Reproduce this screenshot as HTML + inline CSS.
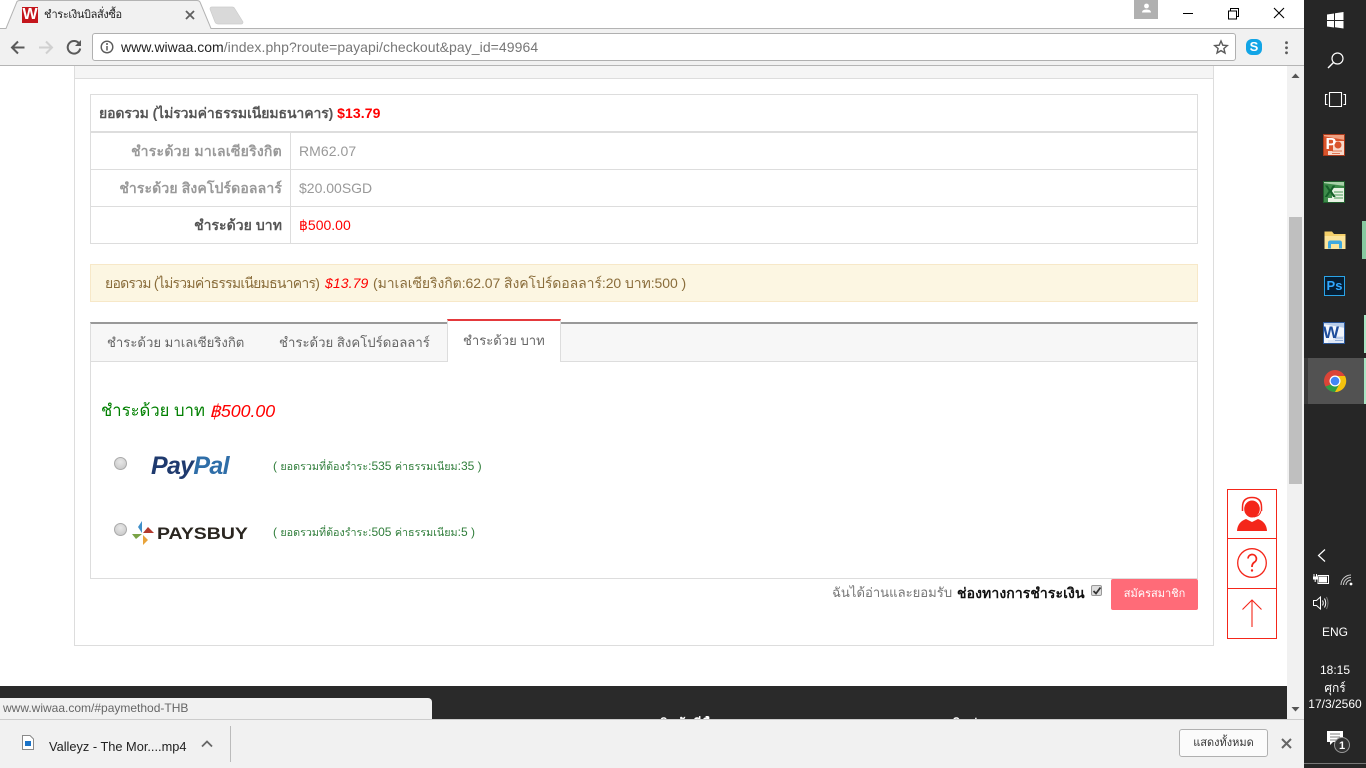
<!DOCTYPE html>
<html><head><meta charset="utf-8"><title>ชำระเงินบิลสั่งซื้อ</title>
<style>
html,body{margin:0;padding:0;width:1366px;height:768px;overflow:hidden;background:#fff;font-family:"Liberation Sans","Noto Sans CJK SC",sans-serif;font-size:14px;color:#333}
.a{position:absolute;white-space:nowrap;box-sizing:border-box}
svg{position:absolute;overflow:visible}
.t{font-size:10.75px}
</style></head><body>
<!-- tab strip -->
<div class="a" style="left:0;top:0;width:1304px;height:29px;background:#fff"></div>
<div class="a" style="left:0;top:28px;width:1304px;height:38px;background:#f1f1f1"></div>
<div class="a" style="left:0;top:65px;width:1304px;height:1px;background:#b5b5b5"></div>
<svg style="left:0;top:0" width="260" height="30"><path d="M0 28.5H6L17 1.5Q18 0.5 20 0.5H197Q199 .5 200 2L211 28.5H1304" fill="#f1f1f1" stroke="#b3b3b3"/><path d="M210 9Q210 7 212 7H232Q234 7 235 9L243 22Q243 24 241 24H218Q216 24 215 22Z" fill="#d9d9d9" stroke="#ccc" stroke-width=".7"/></svg>
<div class="a" style="left:22px;top:7px;width:16px;height:16px;background:#c4161c;color:#fff;font:bold 16px/16px 'Liberation Sans';text-align:center">W</div>
<div class="a" style="left:44px;top:8px;font-size:11px;line-height:15px;letter-spacing:-.35px;color:#222">ชำระเงินบิลสั่งซื้อ</div>
<svg style="left:185px;top:10px" width="10" height="10"><path d="M1 1L9 9M9 1L1 9" stroke="#5f5f5f" stroke-width="1.8"/></svg>
<!-- window controls -->
<div class="a" style="left:1134px;top:0;width:24px;height:19px;background:#b0b0b0"></div>
<svg style="left:1141px;top:3px" width="11" height="10"><circle cx="5.500" cy="3" r="2.400" fill="#fff"/><path d="M1 9.500Q1 6.500 5.500 6.500T10 9.500Z" fill="#fff"/></svg>
<svg style="left:1183px;top:8px" width="100" height="12"><path d="M0 5.500H10" stroke="#000"/><path d="M45.500 5V13H53.500V5ZM47.500 5V2.500H55.500V10.500H53.500" fill="none" stroke="#000" transform="translate(0,-2)"/><path d="M91 0L101 10M101 0L91 10" stroke="#000" stroke-width="1.100"/></svg>
<!-- toolbar -->
<svg style="left:10px;top:39px" width="75" height="18"><path d="M14.500 8.500H2.500M8 2.500L2 8.500L8 14.500" fill="none" stroke="#5a5a5a" stroke-width="2"/><path d="M29 8.500H41.500M36 2.500L42 8.500L36 14.500" fill="none" stroke="#d0d0d0" stroke-width="2"/><path d="M69.500 5.200A6.300 6.300 0 1 0 70.200 9.500" fill="none" stroke="#5a5a5a" stroke-width="2"/><path d="M71 1V7H65Z" fill="#5a5a5a"/></svg>
<div class="a" style="left:92px;top:33px;width:1144px;height:28px;background:#fff;border:1px solid #b0b0b0;border-radius:3px"></div>
<svg style="left:100px;top:40px" width="14" height="14"><circle cx="7" cy="7" r="5.800" fill="none" stroke="#5a5a5a" stroke-width="1.400"/><path d="M7 6V10.500" stroke="#5a5a5a" stroke-width="1.500"/><circle cx="7" cy="4" r="1" fill="#5a5a5a"/></svg>
<div class="a" style="left:121px;top:39px;font-size:14px;line-height:16px;color:#222">www.wiwaa.com<span style="color:#777;letter-spacing:.07px">/index.php?route=payapi/checkout&amp;pay_id=49964</span></div>
<svg style="left:1214px;top:40px" width="14" height="14"><path d="M7 1L8.800 5.200L13.300 5.600L9.900 8.500L11 13L7 10.600L3 13L4.100 8.500L.7 5.600L5.200 5.200Z" fill="none" stroke="#5a5a5a" stroke-width="1.400"/></svg>
<div class="a" style="left:1246px;top:39px;width:16px;height:16px;background:#12a5e6;border-radius:6px;color:#fff;font:bold 13px/16px 'Liberation Sans';text-align:center">S</div>
<svg style="left:1284px;top:41px" width="6" height="14"><circle cx="2.500" cy="1.700" r="1.400" fill="#5a5a5a"/><circle cx="2.500" cy="6.800" r="1.400" fill="#5a5a5a"/><circle cx="2.500" cy="11.800" r="1.400" fill="#5a5a5a"/></svg>
<!-- page -->
<div class="a" style="left:74px;top:66px;width:1140px;height:580px;border:1px solid #ddd;border-top:0;background:#fff"></div>
<div class="a" style="left:75px;top:66px;width:1138px;height:13px;background:#f5f5f5;border-bottom:1px solid #ddd"></div>
<!-- table -->
<div class="a" style="left:90px;top:94px;width:1108px;height:150px;border:1px solid #ddd"></div>
<div class="a" style="left:91px;top:131px;width:1106px;height:2px;background:#ddd"></div>
<div class="a" style="left:91px;top:169px;width:1106px;height:1px;background:#ddd"></div>
<div class="a" style="left:91px;top:206px;width:1106px;height:1px;background:#ddd"></div>
<div class="a" style="left:290px;top:133px;width:1px;height:110px;background:#ddd"></div>
<div class="a" style="left:99px;top:105px;font-weight:bold;line-height:16px;color:#555;letter-spacing:-.09px">ยอดรวม (ไม่รวมค่าธรรมเนียมธนาคาร) <span style="color:#f00;letter-spacing:.1px">$13.79</span></div>
<div class="a" style="right:1084px;top:143px;font-weight:bold;line-height:16px;color:#999;letter-spacing:.25px">ชำระด้วย มาเลเซียริงกิต</div>
<div class="a" style="left:299px;top:143px;line-height:16px;color:#999;letter-spacing:.05px">RM62.07</div>
<div class="a" style="right:1084px;top:180px;font-weight:bold;line-height:16px;color:#999;letter-spacing:.13px">ชำระด้วย สิงคโปร์ดอลลาร์</div>
<div class="a" style="left:299px;top:180px;line-height:16px;color:#999">$20.00SGD</div>
<div class="a" style="right:1084px;top:217px;font-weight:bold;line-height:16px;color:#555;letter-spacing:.05px">ชำระด้วย บาท</div>
<div class="a" style="left:299px;top:217px;line-height:16px;color:#f00">฿500.00</div>
<!-- alert -->
<div class="a" style="left:90px;top:264px;width:1108px;height:38px;background:#fcf6e2;border:1px solid #f7e8c8"></div>
<div class="a" style="left:105px;top:275px;line-height:16px;color:#8a6d3b;letter-spacing:-.76px">ยอดรวม (ไม่รวมค่าธรรมเนียมธนาคาร)</div>
<div class="a" style="left:325px;top:275px;line-height:16px;color:#f00;font-style:italic;letter-spacing:.1px">$13.79</div>
<div class="a" style="left:373px;top:275px;line-height:16px;color:#8a6d3b;letter-spacing:-.07px">(มาเลเซียริงกิต:62.07 สิงคโปร์ดอลลาร์:20 บาท:500 )</div>
<!-- tabs -->
<div class="a" style="left:90px;top:322px;width:1108px;height:257px;border:1px solid #ddd;border-top:2px solid #999"></div>
<div class="a" style="left:91px;top:324px;width:1106px;height:38px;background:#f7f7f7;border-bottom:1px solid #ddd"></div>
<div class="a" style="left:447px;top:319px;width:114px;height:43px;background:#fff;border:1px solid #ddd;border-top:2px solid #e4393c;border-bottom:0"></div>
<div class="a" style="left:107px;top:335px;font-size:13.15px;line-height:16px;color:#666">ชำระด้วย มาเลเซียริงกิต</div>
<div class="a" style="left:279px;top:335px;font-size:13.2px;line-height:16px;color:#666">ชำระด้วย สิงคโปร์ดอลลาร์</div>
<div class="a" style="left:463px;top:333px;font-size:13.1px;line-height:16px;color:#666">ชำระด้วย บาท</div>
<div class="a" style="left:101px;top:401px;font-size:16.65px;line-height:20px;color:#008000">ชำระด้วย บาท</div>
<div class="a" style="left:209.5px;top:401px;font-size:17.8px;line-height:20px;font-style:italic;color:#f00">฿500.00</div>
<!-- radios -->
<div class="a" style="left:114px;top:457px;width:13px;height:13px;border-radius:50%;background:radial-gradient(circle at 50% 35%,#e8e8e8,#c4c4c4);border:1px solid #aaa"></div>
<div class="a" style="left:114px;top:523px;width:13px;height:13px;border-radius:50%;background:radial-gradient(circle at 50% 35%,#e8e8e8,#c4c4c4);border:1px solid #aaa"></div>
<div class="a" style="left:151px;top:451px;font:italic bold 25px/30px 'Liberation Sans';letter-spacing:-.7px;color:#1f3a6e">Pay<span style="color:#2f6ea8">Pal</span></div>
<svg style="left:131px;top:519px" width="25" height="27"><path d="M11 2L7 8L11 14Z" fill="#3f8fc9"/><path d="M12 14H23L17 8Z" fill="#b23a2e"/><path d="M12 16L17 21L12 26Z" fill="#e8a33a"/><path d="M1 15H11L5 20Z" fill="#7aa346"/></svg>
<div class="a" style="left:157px;top:524px;font:bold 16.5px/20px 'Liberation Sans';color:#2a2620;transform:scaleX(1.18);transform-origin:left">PAYSBUY</div>
<div class="a" style="left:273px;top:459px;font-size:12px;line-height:15px;color:#2f7d3a">( <span class="t">ยอดรวมที่ต้องรำระ</span>:535 <span class="t">ค่าธรรมเนียม</span>:35 )</div>
<div class="a" style="left:273px;top:525px;font-size:12px;line-height:15px;color:#2f7d3a">( <span class="t">ยอดรวมที่ต้องรำระ</span>:505 <span class="t">ค่าธรรมเนียม</span>:5 )</div>
<!-- agree -->
<div class="a" style="left:832px;top:585px;font-size:13.1px;line-height:16px;color:#777">ฉันได้อ่านและยอมรับ</div>
<div class="a" style="left:957px;top:585px;line-height:16px;color:#111;font-weight:bold;letter-spacing:.1px">ช่องทางการชำระเงิน</div>
<div class="a" style="left:1091px;top:585px;width:11px;height:11px;background:#ddd;border:1px solid #999;border-radius:2px"></div>
<svg style="left:1092px;top:586px" width="10" height="10"><path d="M1.500 5L4 7.500L8.500 1.500" fill="none" stroke="#333" stroke-width="1.800"/></svg>
<div class="a" style="left:1111px;top:579px;width:87px;height:31px;background:#ff6b78;border-radius:2px;color:#fff;font-size:11px;line-height:30px;text-align:center">สมัครสมาชิก</div>
<!-- floating -->
<div class="a" style="left:1227px;top:489px;width:50px;height:150px;border:1px solid #f4261a;background:#fff"></div>
<div class="a" style="left:1228px;top:538px;width:48px;height:1px;background:#f4261a"></div>
<div class="a" style="left:1228px;top:588px;width:48px;height:1px;background:#f4261a"></div>
<svg style="left:1227px;top:489px" width="50" height="150"><ellipse cx="25" cy="20" rx="7.800" ry="8.500" fill="#f4261a"/><path d="M15.500 22V18Q15.500 8.500 25 8.500T34.500 18V22" fill="none" stroke="#f4261a" stroke-width="1.500"/><path d="M34 22Q33 27 27 28" fill="none" stroke="#f4261a"/><path d="M10 42Q10.500 33 19 30L25 33L31 30Q39.500 33 40 42Z" fill="#f4261a"/><circle cx="25" cy="74" r="14.300" fill="none" stroke="#f4261a" stroke-width="1.300"/><path d="M21 69.500A4.200 4.200 0 1 1 27 73.500Q25 75 25 78" fill="none" stroke="#f4261a" stroke-width="1.800"/><circle cx="25" cy="81.500" r="1.200" fill="#f4261a"/><path d="M25 138V111M15.500 120.500L25 111L34.500 120.500" fill="none" stroke="#f4261a" stroke-width="1.100"/></svg>
<!-- footer -->
<div class="a" style="left:0;top:686px;width:1287px;height:33px;background:#2a2a2a"></div>
<div class="a" style="left:660px;top:716px;height:3px;overflow:hidden;font-size:13px;line-height:16px;color:#fff;font-weight:bold">สินค้าที่ซื้อ</div>
<div class="a" style="left:952px;top:716px;height:3px;overflow:hidden;font-size:13px;line-height:16px;color:#fff;font-weight:bold">ติดต่อ</div>
<div class="a" style="left:0;top:698px;width:432px;height:22px;background:#f1f1f1;border-top-right-radius:4px"></div>
<div class="a" style="left:3px;top:701px;font-size:12px;line-height:15px;color:#666">www.wiwaa.com/#paymethod-THB</div>
<!-- scrollbar -->
<div class="a" style="left:1287px;top:66px;width:17px;height:653px;background:#f1f1f1"></div>
<div class="a" style="left:1289px;top:217px;width:13px;height:267px;background:#bfbfbf"></div>
<svg style="left:1291px;top:73px" width="10" height="640"><path d="M.5 5L4.500 0.500L8.500 5Z" fill="#555"/><path d="M.5 634L4.500 638.500L8.500 634Z" fill="#555"/></svg>
<!-- download bar -->
<div class="a" style="left:0;top:719px;width:1304px;height:49px;background:#f1f1f1;border-top:1px solid #ccc"></div>
<svg style="left:22px;top:735px" width="12" height="15"><path d="M.5 .5H8L11.500 4V14.500H.5Z" fill="#fff" stroke="#8a8a8a"/><rect x="3" y="6" width="6" height="5" fill="#1a73c8"/></svg>
<div class="a" style="left:49px;top:739px;font-size:12.8px;line-height:15px;color:#222">Valleyz - The Mor....mp4</div>
<svg style="left:201px;top:740px" width="12" height="8"><path d="M1 6.500L6 1.500L11 6.500" fill="none" stroke="#666" stroke-width="1.800"/></svg>
<div class="a" style="left:230px;top:726px;width:1px;height:36px;background:#bbb"></div>
<div class="a" style="left:1179px;top:729px;width:89px;height:28px;background:#fbfbfb;border:1px solid #b0b0b0;border-radius:3px;font-size:11px;line-height:27px;text-align:center;color:#333">แสดงทั้งหมด</div>
<svg style="left:1281px;top:738px" width="11" height="11"><path d="M1 1L10 10M10 1L1 10" stroke="#666" stroke-width="2"/></svg>
<!-- taskbar -->
<div class="a" style="left:1304px;top:0;width:62px;height:768px;background:#262626"></div>
<div class="a" style="left:1304px;top:358px;width:4px;height:46px;background:#3a3a3a"></div>
<div class="a" style="left:1308px;top:358px;width:56px;height:46px;background:#525252"></div>
<div class="a" style="left:1362px;top:221px;width:4px;height:38px;background:#86c9a0"></div>
<div class="a" style="left:1364px;top:315px;width:2px;height:38px;background:#a8e6c4"></div>
<div class="a" style="left:1364px;top:358px;width:2px;height:46px;background:#a8e6c4"></div>
<svg style="left:1327px;top:12px" width="17" height="17"><path d="M0 2.500L7 1.500V8H0ZM8 1.300L16.500 0V8H8ZM0 9H7V15.500L0 14.500ZM8 9H16.500V16.500L8 15.300Z" fill="#fff"/></svg>
<svg style="left:1327px;top:52px" width="17" height="17"><circle cx="10.500" cy="6.500" r="5.500" fill="none" stroke="#fff" stroke-width="1.200"/><path d="M6.500 10.500L1 16" stroke="#fff" stroke-width="1.400"/></svg>
<svg style="left:1325px;top:92px" width="21" height="15"><path d="M4.500 .5H16.500V14.500H4.500ZM2.500 2.500H.5V12.500H2.500M18.500 2.500H20.500V12.500H18.500" fill="none" stroke="#fff" stroke-width="1.100"/></svg>
<!-- app icons -->
<svg style="left:1323px;top:134px" width="22" height="22"><rect width="22" height="22" fill="#d9542b"/><path d="M0 0H22V6L0 2Z" fill="#f0a080"/><path d="M10 7H21V21H5V17H10Z" fill="#f7d9cb"/><circle cx="15" cy="11" r="3.500" fill="#d9542b"/><path d="M9 17H19M9 19.500H17" stroke="#d9542b" stroke-width=".8"/><rect x=".5" y=".5" width="21" height="21" fill="none" stroke="#a93a1b"/><text x="2.500" y="15" font-family="Liberation Sans" font-size="16" font-weight="bold" fill="#fff">P</text></svg>
<svg style="left:1323px;top:181px" width="22" height="22"><rect width="22" height="22" fill="#3d8b4a"/><path d="M0 0H22V5L0 2Z" fill="#a8d0a8"/><path d="M9 7H21V21H5V17H9Z" fill="#e8f2e4"/><path d="M11 11H20M11 14H20M11 17H20" stroke="#4a9a58" stroke-width=".9"/><rect x=".5" y=".5" width="21" height="21" fill="none" stroke="#1f5e2c"/><text x="1.500" y="16" font-family="Liberation Sans" font-size="17" font-weight="bold" fill="#16602a">X</text></svg>
<svg style="left:1324px;top:231px" width="22" height="19"><path d="M.5 .5H8L10 3H21.500V18H.5Z" fill="#f5d06a"/><path d="M.5 5H21.500V18H.5Z" fill="#fde59a"/><path d="M4 17.500V12Q4 9.500 6.500 9.500H15.500Q18 9.500 18 12V17.500H15V13H7V17.500Z" fill="#3fa9e0"/></svg>
<div class="a" style="left:1324px;top:276px;width:21px;height:20px;background:#061e33;border:1px solid #2aa4e8;color:#31a8ff;font:bold 13px/18px 'Liberation Sans';text-align:center">Ps</div>
<svg style="left:1323px;top:322px" width="22" height="22"><rect width="22" height="22" fill="#f2f6fc"/><path d="M0 0H22V6L0 2Z" fill="#b8cdea"/><path d="M10 14H21V21H5V18H10Z" fill="#dfe8f6"/><path d="M12 16H20M12 18.500H20" stroke="#7a9ad0" stroke-width=".8"/><rect x=".5" y=".5" width="21" height="21" fill="none" stroke="#2a5699"/><text x="0" y="16" font-family="Liberation Sans" font-size="17" font-weight="bold" fill="#1f4e9c" letter-spacing="-1">W</text></svg>
<svg style="left:1324px;top:370px" width="22" height="22"><circle cx="11" cy="11" r="11" fill="#db4437"/><path d="M1.500 16.500A11 11 0 0 0 15 21.300L19 13H11Z" fill="#2f9e44"/><path d="M11 6H21A11 11 0 0 1 11 22L16 13Z" fill="#f4c20d"/><circle cx="11" cy="11" r="5.500" fill="#fff"/><circle cx="11" cy="11" r="4.300" fill="#4285f4"/></svg>
<!-- tray -->
<svg style="left:1317px;top:549px" width="9" height="13"><path d="M8 .5L1.500 6.500L8 12.500" fill="none" stroke="#fff" stroke-width="1.200"/></svg>
<svg style="left:1313px;top:573px" width="17" height="12"><path d="M5 2.500H15.500V10.500H5Z" fill="none" stroke="#fff"/><rect x="6" y="3.500" width="8" height="6" fill="#fff"/><path d="M1 1V4M3.500 1V4M.5 4H4V6H.5ZM2.200 6V9" stroke="#fff" fill="#fff"/></svg>
<svg style="left:1340px;top:574px" width="13" height="12"><path d="M1 11A10 10 0 0 1 11 1M3.500 11A7.500 7.500 0 0 1 11 3.500M6 11A5 5 0 0 1 11 6" fill="none" stroke="#ccc"/><circle cx="11" cy="10" r="1.400" fill="#fff"/></svg>
<svg style="left:1313px;top:596px" width="16" height="14"><path d="M.5 4.500H3.500L7.500 1V13L3.500 9.500H.5Z" fill="none" stroke="#fff"/><path d="M9.500 4.500Q11 7 9.500 9.500M11.500 2.500Q14 7 11.500 11.500" fill="none" stroke="#fff"/><path d="M13.500 1Q16.500 7 13.500 13" fill="none" stroke="#777"/></svg>
<div class="a" style="left:1304px;top:625px;width:62px;font-size:12px;line-height:15px;color:#fff;text-align:center">ENG</div>
<div class="a" style="left:1304px;top:662px;width:62px;font-size:12px;line-height:16px;color:#fff;text-align:center">18:15</div>
<div class="a" style="left:1304px;top:680px;width:62px;font-size:12px;line-height:16px;color:#fff;text-align:center">ศุกร์</div>
<div class="a" style="left:1304px;top:696px;width:62px;font-size:12px;line-height:16px;color:#fff;text-align:center">17/3/2560</div>
<svg style="left:1327px;top:730px" width="26" height="24"><path d="M0 1H16V12H6L3 15V12H0Z" fill="#fff"/><path d="M3 4H13M3 7H13M3 10H10" stroke="#555" stroke-width=".8"/><circle cx="15" cy="15" r="7.500" fill="#333" stroke="#999"/><text x="15" y="19" font-family="Liberation Sans" font-size="11" font-weight="bold" fill="#fff" text-anchor="middle">1</text></svg>
<div class="a" style="left:1304px;top:763px;width:62px;height:1px;background:#777"></div>
</body></html>
